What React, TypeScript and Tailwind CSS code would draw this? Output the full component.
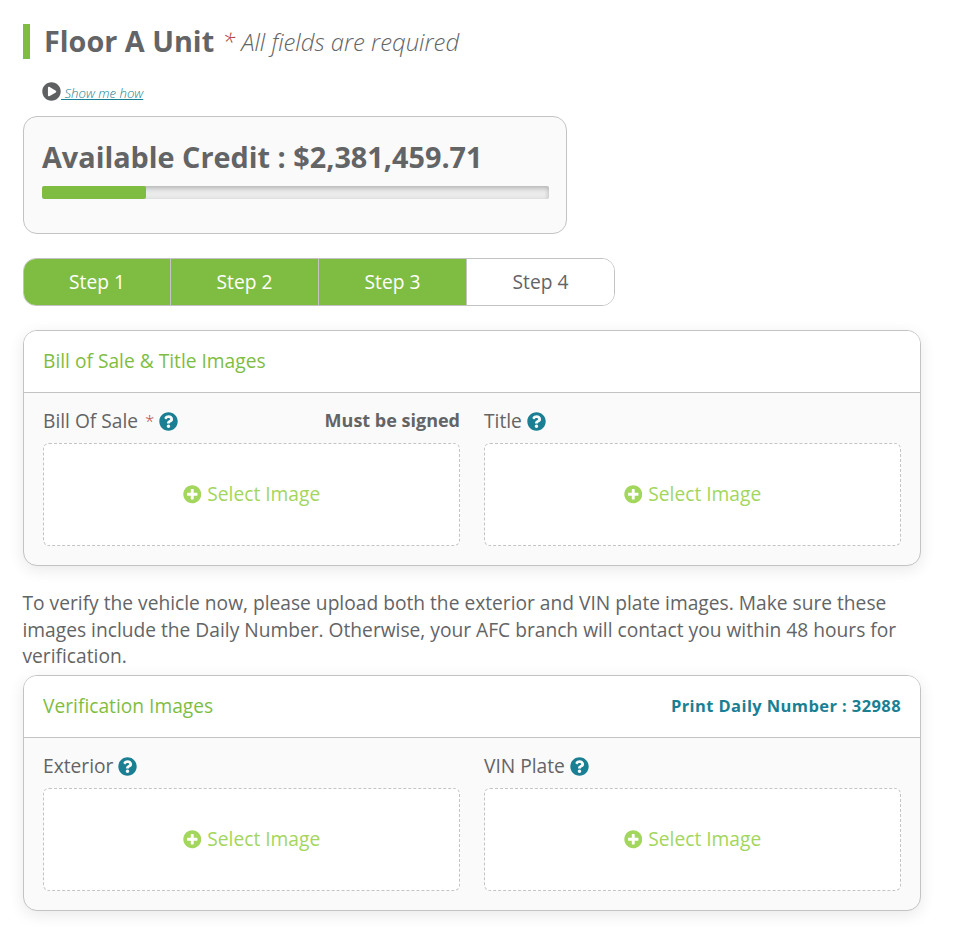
import type { ReactNode } from "react";
import { FaPlayCircle, FaQuestionCircle, FaPlusCircle } from "react-icons/fa";

function UploadField({ label, required, note }: { label: string; required?: boolean; note?: string }) {
  return (
    <div className="flex min-w-0 flex-1 flex-col">
      <div className="flex h-[26px] items-center whitespace-nowrap text-[19.2px]">
        <span>{label}</span>
        {required && <span className="ml-[7px] text-[17px] font-light text-[#b5443c]">*</span>}
        <FaQuestionCircle className="ml-[5px] size-[19px] text-[#1b7f93]" />
        {note && <strong className="ml-auto pb-[2px] text-[18px] font-bold">{note}</strong>}
      </div>
      <button className="mt-[9px] flex h-[103px] items-center justify-center rounded-[6px] border border-dashed border-[#c4c4c4] bg-white text-[19.2px] text-[#a3d65c]">
        <FaPlusCircle className="mr-[6px] size-[18.5px]" />
        <span>Select Image</span>
      </button>
    </div>
  );
}

function Panel({ title, action, children }: { title: string; action?: string; children: ReactNode }) {
  return (
    <section className="h-[236px] w-[898px] overflow-hidden rounded-[14px] border border-[#c3c3c3] bg-[#fafafa] shadow-[0_4px_16px_rgba(0,0,0,0.09)]">
      <header className="flex h-[62px] items-center justify-between border-b border-[#c3c3c3] bg-white px-[19px]">
        <h2 className="text-[19.2px] text-[#7fbd42]">{title}</h2>
        {action && <a className="text-[16.5px] font-bold tracking-[0.4px] text-[#1b7f93]">{action}</a>}
      </header>
      <div className="flex gap-[24px] px-[19px] pt-[15px]">{children}</div>
    </section>
  );
}

const steps = ["Step 1", "Step 2", "Step 3", "Step 4"];

export default function App() {
  return (
    <main className="h-[927px] w-[953px] overflow-hidden bg-white pl-[23px] pt-[24px] font-['Open_Sans',sans-serif] text-[#636466]">
      <div className="flex h-[35px] items-center whitespace-nowrap border-l-[7px] border-[#7fbd42] pl-[14px]">
        <h1 className="pb-[2px] text-[28.8px] font-bold">Floor A Unit</h1>
        <p className="ml-[8px] pt-px text-[23.9px] font-light italic">
          <span className="text-[#b5443c]">*</span> All fields are required
        </p>
      </div>
      <div className="mt-[20px] flex h-[24px] items-center pl-[19px]">
        <FaPlayCircle className="size-[19px] text-[#5f6062]" />
        <a className="whitespace-pre pt-[5px] text-[13.2px] font-light italic text-[#1b7f93] underline"> Show me how</a>
      </div>
      <section className="mt-[13px] h-[118px] w-[544px] rounded-[14px] border border-[#c3c3c3] bg-[#fafafa] pl-[18px] pr-[17px] pt-[20px]">
        <h2 className="h-[40px] whitespace-nowrap text-[28.8px] leading-[40px] font-bold">Available Credit : $2,381,459.71</h2>
        <div className="mt-[9px] h-[13px] overflow-hidden rounded-[2px] bg-[#ebebeb] shadow-[inset_0_2px_5px_rgba(0,0,0,0.25)]">
          <div className="h-full w-[104px] rounded-[2px] bg-[#7fbd42]" />
        </div>
      </section>
      <nav className="mt-[24px] grid h-[48px] w-[592px] grid-cols-[147px_148px_148px_147px] overflow-hidden rounded-[13px] border border-[#c3c3c3] text-[19.2px]">
        {steps.map((step, i) => (
          <div
            key={step}
            className={
              i < 3
                ? "flex items-center justify-center border-r border-[#c3c3c3] bg-[#7fbd42] text-white"
                : "flex items-center justify-center bg-white"
            }
          >
            {step}
          </div>
        ))}
      </nav>
      <div className="mt-[24px]">
        <Panel title="Bill of Sale & Title Images">
          <UploadField label="Bill Of Sale" required note="Must be signed" />
          <UploadField label="Title" />
        </Panel>
      </div>
      <p className="-ml-[0.5px] mt-[24px] h-[79px] whitespace-nowrap text-[19.2px] leading-[26.5px]">
        To verify the vehicle now, please upload both the exterior and VIN plate images. Make sure these
        <br />
        images include the Daily Number. Otherwise, your AFC branch will contact you within 48 hours for
        <br />
        verification.
      </p>
      <div className="mt-[6px]">
        <Panel title="Verification Images" action="Print Daily Number : 32988">
          <UploadField label="Exterior" />
          <UploadField label="VIN Plate" />
        </Panel>
      </div>
    </main>
  );
}
